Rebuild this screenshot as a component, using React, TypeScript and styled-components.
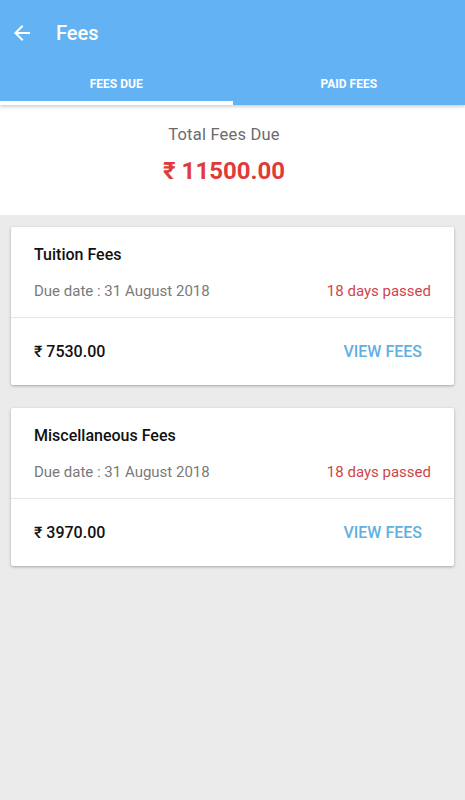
import styled, { createGlobalStyle } from "styled-components";

const GlobalStyle = createGlobalStyle`
    html, body {
        margin: 0;
        padding: 0;
        background: #ebebeb;
        font-family: Roboto, "Noto Sans", Arial, sans-serif;
    }
    * { box-sizing: border-box; }
`

type Fee = { title: string; due: string; late: string; amount: string };

const fees: Fee[] = [
    { title: "Tuition Fees", due: "31 August 2018", late: "18 days passed", amount: "7530.00" },
    { title: "Miscellaneous Fees", due: "31 August 2018", late: "18 days passed", amount: "3970.00" },
];

export default function App(){
    return(
        <Page>
            <GlobalStyle />
            <Header>
                <Toolbar>
                    <BackBtn aria-label="back">
                        <svg width="24" height="24" viewBox="0 0 24 24">
                            <path d="M20 11H7.83l5.59-5.59L12 4l-8 8 8 8 1.41-1.41L7.83 13H20v-2z" fill="#fff" />
                        </svg>
                    </BackBtn>
                    <Title>Fees</Title>
                </Toolbar>
                <Tabs>
                    <Tab $active>FEES DUE</Tab>
                    <Tab>PAID FEES</Tab>
                </Tabs>
            </Header>

            <Summary>
                <SummaryLabel>Total Fees Due</SummaryLabel>
                <SummaryAmount>₹ 11500.00</SummaryAmount>
            </Summary>

            <List>
                {fees.map((fee) => (
                    <Card key={fee.title}>
                        <CardTop>
                            <CardTitle>{fee.title}</CardTitle>
                            <DueRow>
                                <DueDate>Due date : {fee.due}</DueDate>
                                <Late>{fee.late}</Late>
                            </DueRow>
                        </CardTop>
                        <CardBottom>
                            <Amount>₹ {fee.amount}</Amount>
                            <ViewBtn>VIEW FEES</ViewBtn>
                        </CardBottom>
                    </Card>
                ))}
            </List>
        </Page>
    )
}

const Page = styled.div`
    min-height: 800px;
    background: #ebebeb;
`
const Header = styled.header`
    background: #63b3f4;
    box-shadow: 0 2px 3px rgba(0,0,0,0.18);
    position: relative;
    z-index: 1;
`
const Toolbar = styled.div`
    height: 62px;
    display: flex;
    align-items: center;
    padding: 3px 0 0 10px;
`
const BackBtn = styled.button`
    border: none;
    background: none;
    padding: 0;
    width: 24px;
    height: 24px;
    display: flex;
    align-items: center;
    justify-content: center;
    margin-right: 22px;
`
const Title = styled.h1`
    margin: 0;
    color: #fff;
    font-size: 20px;
    font-weight: 500;
`
const Tabs = styled.div`
    display: flex;
    height: 43px;
`
const Tab = styled.div<{ $active?: boolean }>`
    flex: 1;
    display: flex;
    align-items: center;
    justify-content: center;
    padding-top: 4px;
    color: #fff;
    font-size: 12px;
    font-weight: 700;
    border-bottom: 4px solid ${p => p.$active ? "#fff" : "transparent"};
`
const Summary = styled.section`
    background: #fff;
    height: 110px;
    display: flex;
    flex-direction: column;
    align-items: center;
    padding: 20px 17px 0 0;
`
const SummaryLabel = styled.div`
    color: #6b6b6b;
    font-size: 16.5px;
    letter-spacing: 0.2px;
`
const SummaryAmount = styled.div`
    margin-top: 13px;
    color: #df3b3b;
    font-size: 24px;
    font-weight: 700;
`
const List = styled.div`
    padding: 12px 11px;
    display: flex;
    flex-direction: column;
    gap: 23px;
`
const Card = styled.div`
    background: #fff;
    border-radius: 2px;
    box-shadow: 0 1px 3px rgba(0,0,0,0.3);
`
const CardTop = styled.div`
    padding: 18px 23px 0 23px;
    height: 91px;
    border-bottom: 1px solid #e6e6e6;
`
const CardTitle = styled.div`
    color: #111;
    font-size: 16px;
    font-weight: 500;
`
const DueRow = styled.div`
    display: flex;
    justify-content: space-between;
    margin-top: 18px;
    font-size: 15px;
`
const DueDate = styled.span`
    color: #7a7a7a;
`
const Late = styled.span`
    color: #d0454a;
`
const CardBottom = styled.div`
    height: 67px;
    display: flex;
    align-items: center;
    justify-content: space-between;
    padding: 0 32px 1px 23px;
`
const Amount = styled.span`
    color: #111;
    font-size: 16px;
    font-weight: 500;
`
const ViewBtn = styled.button`
    border: none;
    background: none;
    padding: 0;
    color: #62b0e2;
    font-family: inherit;
    font-size: 16px;
    font-weight: 500;
`
